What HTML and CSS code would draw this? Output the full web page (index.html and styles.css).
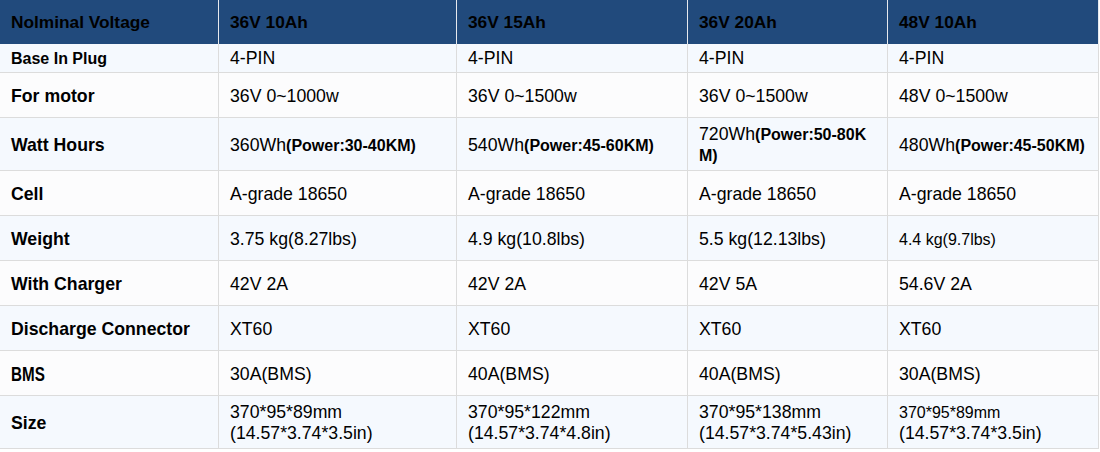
FILE: index.html
```html
<!DOCTYPE html>
<html>
<head>
<meta charset="utf-8">
<link rel="stylesheet" href="styles.css">
</head>
<body>
<div class="spec">
  <div class="c hd">Nolminal Voltage</div>
  <div class="c hd">36V 10Ah</div>
  <div class="c hd">36V 15Ah</div>
  <div class="c hd">36V 20Ah</div>
  <div class="c hd">48V 10Ah</div>

  <div class="c lb sm odd">Base In Plug</div>
  <div class="c odd tight">4-PIN</div>
  <div class="c odd tight">4-PIN</div>
  <div class="c odd tight">4-PIN</div>
  <div class="c odd tight">4-PIN</div>

  <div class="c lb">For motor</div>
  <div class="c">36V 0~1000w</div>
  <div class="c">36V 0~1500w</div>
  <div class="c">36V 0~1500w</div>
  <div class="c">48V 0~1500w</div>

  <div class="c lb odd">Watt Hours</div>
  <div class="c odd"><span>360Wh<b>(Power:30-40KM)</b></span></div>
  <div class="c odd"><span>540Wh<b>(Power:45-60KM)</b></span></div>
  <div class="c odd"><span>720Wh<b>(Power:50-80K<br>M)</b></span></div>
  <div class="c odd"><span>480Wh<b>(Power:45-50KM)</b></span></div>

  <div class="c lb">Cell</div>
  <div class="c">A-grade 18650</div>
  <div class="c">A-grade 18650</div>
  <div class="c">A-grade 18650</div>
  <div class="c">A-grade 18650</div>

  <div class="c lb odd">Weight</div>
  <div class="c odd">3.75 kg(8.27lbs)</div>
  <div class="c odd">4.9 kg(10.8lbs)</div>
  <div class="c odd">5.5 kg(12.13lbs)</div>
  <div class="c odd small">4.4 kg(9.7lbs)</div>

  <div class="c lb">With Charger</div>
  <div class="c">42V 2A</div>
  <div class="c">42V 2A</div>
  <div class="c">42V 5A</div>
  <div class="c">54.6V 2A</div>

  <div class="c lb odd">Discharge Connector</div>
  <div class="c odd">XT60</div>
  <div class="c odd">XT60</div>
  <div class="c odd">XT60</div>
  <div class="c odd">XT60</div>

  <div class="c lb"><span class="narrow">BMS</span></div>
  <div class="c">30A(BMS)</div>
  <div class="c">40A(BMS)</div>
  <div class="c">40A(BMS)</div>
  <div class="c">30A(BMS)</div>

  <div class="c lb odd">Size</div>
  <div class="c odd"><span>370*95*89mm<br>(14.57*3.74*3.5in)</span></div>
  <div class="c odd"><span>370*95*122mm<br>(14.57*3.74*4.8in)</span></div>
  <div class="c odd"><span>370*95*138mm<br>(14.57*3.74*5.43in)</span></div>
  <div class="c odd"><span><small class="sm16">370*95*89mm</small><br>(14.57*3.74*3.5in)</span></div>
</div>
</body>
</html>
```

FILE: styles.css
```css
html, body {
  margin: 0;
  padding: 0;
  background: #ffffff;
}

.spec {
  display: grid;
  grid-template-columns: 219px 238px 231px 200px 211px;
  grid-template-rows: 44px 29px 45px 53px 45px 45px 45px 45px 45px 53px;
  width: 1099px;
  font-family: "Liberation Sans", Arial, sans-serif;
  font-size: 17.7px;
  color: #000;
}

.c {
  box-sizing: border-box;
  display: flex;
  align-items: center;
  padding-left: 11px;
  padding-top: 2px;
  border-right: 1px solid #dcdcdc;
  border-bottom: 1px solid #dcdcdc;
  background: #fcfcfd;
  line-height: 21px;
  white-space: nowrap;
}

.c.odd {
  background: #f5f9fe;
}

.c.hd {
  background: #214a7c;
  border-bottom: none;
  border-right: 1px solid #e6e9ee;
  font-weight: bold;
  font-size: 17.3px;
  padding-top: 0;
}

.c.lb {
  font-weight: bold;
}

.c.sm {
  font-size: 16px;
  padding-top: 0;
}

.c.tight {
  padding-top: 0;
}

.c.small {
  font-size: 16px;
}

.narrow {
  display: inline-block;
  font-size: 19.5px;
  transform: scaleX(0.78);
  transform-origin: left center;
}

.c b {
  font-size: 16px;
}

.sm16 {
  font-size: 16px;
}
```
